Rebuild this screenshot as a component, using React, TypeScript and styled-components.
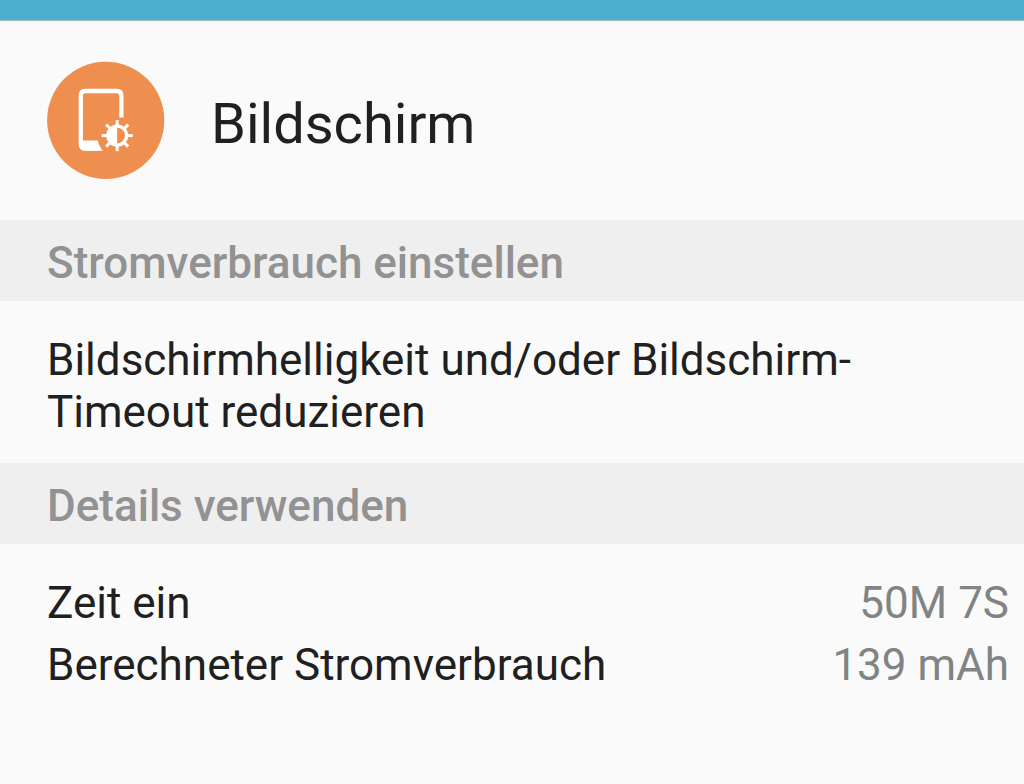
import React from "react";
import styled, { createGlobalStyle } from "styled-components";

const GlobalStyle = createGlobalStyle`
  *, *::before, *::after { box-sizing: border-box; }
  html { background: #fafafa; }
  body {
    margin: 0;
    background: #fafafa;
    color: #202020;
    font-family: Roboto, "Liberation Sans", sans-serif;
    font-size: 44px;
    line-height: 52px;
  }
`;

const Page = styled.main`
  min-height: 100vh;
`;

const ToolbarEdge = styled.div`
  height: 20px;
  background: #4cafd0;
  box-shadow: 0 1px 1px #a9c0c6;
`;

const Header = styled.header`
  display: flex;
  align-items: center;
  gap: 46px;
  padding: 41px 47px;
`;

const Badge = styled.svg`
  flex: none;
  display: block;
  width: 118px;
  height: 118px;
`;

const Title = styled.h1`
  margin: 0;
  padding-top: 8px;
  font-size: 56px;
  line-height: 64px;
  font-weight: 400;
`;

const SectionTitle = styled.h2`
  margin: 0;
  padding: 17px 47px 12px;
  background: #efefef;
  color: #929292;
  font-size: 44px;
  line-height: 52px;
  font-weight: 500;
`;

const Advice = styled.p`
  margin: 0;
  padding: 33px 47px 25px;
`;

const Details = styled.dl`
  margin: 0;
  padding: 28px 15px 28px 47px;
`;

const DetailRow = styled.div`
  display: flex;
  justify-content: space-between;
  gap: 24px;
  line-height: 62px;
`;

const Value = styled.dd`
  margin: 0;
  color: #808482;
  white-space: nowrap;
`;

const rayAngles = [0, 45, 90, 135, 180, 225, 270, 315];

function DisplayIcon() {
  return (
    <Badge viewBox="0 0 118 118" aria-hidden="true">
      <circle cx="58.7" cy="59.3" r="58.6" fill="#ee8f50" />
      <path
        d="M74.4 56.5V34.5Q74.4 30 70 30H38.2Q33.8 30 33.8 34.5V83Q33.8 87.6 38.2 87.6H52.6"
        fill="none"
        stroke="#fff"
        strokeWidth="4.3"
      />
      <path d="M33.6 79.5H50.8Q52 86 56.1 89.7H37.6Q33.6 89.7 33.6 85Z" fill="#fff" />
      <g transform="translate(70.2 74.6)">
        <circle r="9.4" fill="none" stroke="#fff" strokeWidth="3.2" />
        <path d="M0 -10A10 10 0 0 0 0 10Z" fill="#fff" />
        {rayAngles.map((angle) => (
          <path key={angle} d="M0 -10V-15.6" stroke="#fff" strokeWidth="3" transform={`rotate(${angle})`} />
        ))}
      </g>
    </Badge>
  );
}

const details = [
  { label: "Zeit ein", value: "50M 7S" },
  { label: "Berechneter Stromverbrauch", value: "139 mAh" },
];

export default function App() {
  return (
    <>
      <GlobalStyle />
      <Page>
        <ToolbarEdge />
        <Header>
          <DisplayIcon />
          <Title>Bildschirm</Title>
        </Header>
        <section>
          <SectionTitle>Stromverbrauch einstellen</SectionTitle>
          <Advice>Bildschirmhelligkeit und/oder Bildschirm-Timeout reduzieren</Advice>
        </section>
        <section>
          <SectionTitle>Details verwenden</SectionTitle>
          <Details>
            {details.map((item) => (
              <DetailRow key={item.label}>
                <dt>{item.label}</dt>
                <Value>{item.value}</Value>
              </DetailRow>
            ))}
          </Details>
        </section>
      </Page>
    </>
  );
}
